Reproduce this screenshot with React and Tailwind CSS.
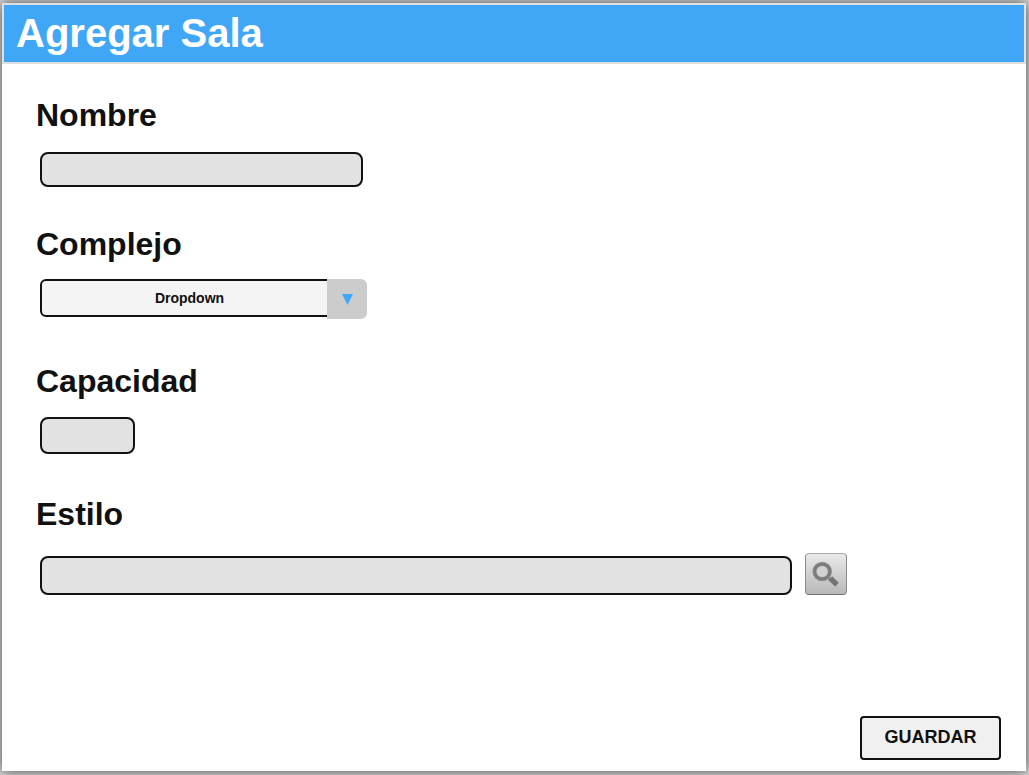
const labelClass = "text-[32px] leading-10 font-bold";
const boxClass =
  "block rounded-lg border-2 border-[#111] bg-[#e2e2e2] px-3 text-base outline-none focus:border-[#40a7f6]";

function SearchIcon() {
  return (
    <svg className="shrink-0" width="42" height="42" viewBox="0 0 42 42" aria-hidden="true">
      <path d="M22 23.500 L25.500 26.500" stroke="#858585" strokeWidth="3" />
      <path d="M25.300 25.300 L32 31.600" stroke="#747474" strokeWidth="5.400" />
      <circle cx="17.200" cy="18.500" r="7.700" fill="#d2d2d2" stroke="#9a9a9a" strokeWidth="4.200" />
      <circle cx="17.200" cy="18.500" r="7.600" fill="none" stroke="#7c7c7c" strokeWidth="3" />
    </svg>
  );
}

export default function App() {
  return (
    <div className="flex min-h-screen flex-col bg-[#d4d4d4] pt-[3px] pr-[3px] pb-1 pl-[2px] font-['Liberation_Sans',Arial,sans-serif] text-[#111]">
      <form
        className="flex flex-1 flex-col bg-white shadow-[0_0_12px_#4a4a4a]"
        onSubmit={(e) => e.preventDefault()}
      >
        <header className="border-2 border-[#e0e0e0] bg-[#40a7f6] px-3 pt-1.5 pb-[7px]">
          <h1 className="text-[40px] leading-[44px] font-bold text-white">Agregar Sala</h1>
        </header>

        <main className="flex flex-1 flex-col px-[34px] pt-[31px]">
          <div className="flex flex-col items-start gap-[17px]">
            <label htmlFor="nombre" className={labelClass}>Nombre</label>
            <div className="pl-1">
              <input id="nombre" type="text" className={`${boxClass} h-[35px] w-[323px]`} />
            </div>
          </div>

          <div className="mt-[37px] flex flex-col items-start gap-[15px]">
            <label htmlFor="complejo" className={labelClass}>Complejo</label>
            <div className="pl-1">
              <div className="relative h-10 w-[327px]">
                <select
                  id="complejo"
                  className="block h-[38px] w-full appearance-none rounded-l-md rounded-r-2xl border-2 border-[#111] bg-[#f4f4f4] pr-7 text-center text-sm font-bold [text-align-last:center]"
                >
                  <option>Dropdown</option>
                </select>
                <span className="pointer-events-none absolute inset-y-0 right-0 flex w-10 items-center justify-center rounded-r-md bg-[#ccc]">
                  <svg width="11" height="11" viewBox="0 0 11 11" aria-hidden="true">
                    <path d="M0 0H11L5.500 11Z" fill="#40a7f6" />
                  </svg>
                </span>
              </div>
            </div>
          </div>

          <div className="mt-[42px] flex flex-col items-start gap-4">
            <label htmlFor="capacidad" className={labelClass}>Capacidad</label>
            <div className="pl-1">
              <input id="capacidad" type="text" inputMode="numeric" className={`${boxClass} h-[37px] w-[95px]`} />
            </div>
          </div>

          <div className="mt-10 flex flex-col gap-[19px]">
            <label htmlFor="estilo" className={`${labelClass} self-start`}>Estilo</label>
            <div className="flex items-end gap-[13px] pl-1">
              <input id="estilo" type="text" className={`${boxClass} h-[39px] w-[752px] min-w-0`} />
              <button
                type="button"
                aria-label="Buscar estilo"
                className="flex size-[42px] shrink-0 items-center justify-center rounded-sm border border-t-[#aaa] border-r-[#8c8c8c] border-b-[#737373] border-l-[#8c8c8c] bg-linear-to-b from-[#eaeaea] to-[#b8b8b8]"
              >
                <SearchIcon />
              </button>
            </div>
          </div>
        </main>

        <footer className="flex justify-end pr-[25px] pb-[11px]">
          <button
            type="submit"
            className="h-11 w-[141px] rounded-sm border-2 border-[#111] bg-[#f0f0f0] pb-0.5 text-lg font-bold"
          >
            GUARDAR
          </button>
        </footer>
      </form>
    </div>
  );
}
